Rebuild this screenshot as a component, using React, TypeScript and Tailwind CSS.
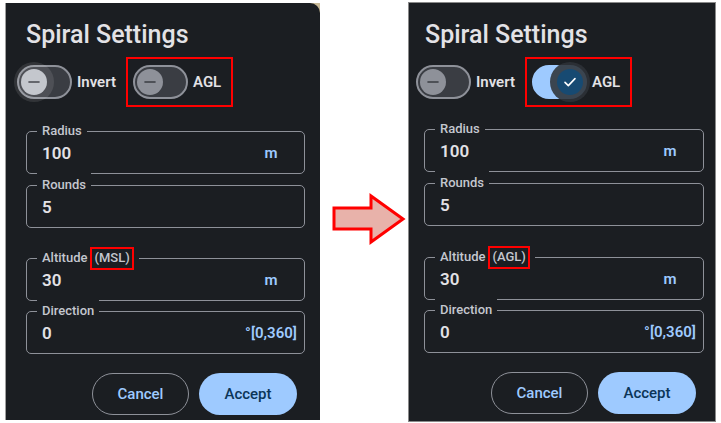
import React from "react";

function MinusIcon({ color }: { color: string }) {
  return (
    <svg width="12" height="12" viewBox="0 0 12 12">
      <line x1="1" y1="6" x2="11" y2="6" stroke={color} strokeWidth="1.6" strokeLinecap="round" />
    </svg>
  );
}

function CheckIcon() {
  return (
    <svg width="16" height="16" viewBox="0 0 24 24" fill="none">
      <path d="M4.5 12.5l5 5L19.5 7" stroke="#ffffff" strokeWidth="2.4" strokeLinecap="round" strokeLinejoin="round" />
    </svg>
  );
}

function Switch({
  checked,
  thumbClass,
  minusColor,
  halo,
}: {
  checked: boolean;
  thumbClass: string;
  minusColor: string;
  halo?: string;
}) {
  return (
    <div
      className={
        checked
          ? "flex h-[34px] w-[55px] shrink-0 items-center justify-end rounded-full border-2 border-[#9ecaff] bg-[#9ecaff] px-[2px]"
          : "flex h-[34px] w-[55px] shrink-0 items-center justify-start rounded-full border-2 border-[#8e9199] bg-[#3a3d43] px-[2px]"
      }
    >
      <div className="relative h-[26px] w-[26px]">
        {halo ? <div className={"absolute -inset-[7px] rounded-full " + halo} /> : null}
        <div className={"relative flex h-[26px] w-[26px] items-center justify-center rounded-full " + thumbClass}>
          {checked ? <CheckIcon /> : <MinusIcon color={minusColor} />}
        </div>
      </div>
    </div>
  );
}

function Field({
  label,
  extra,
  value,
  unit,
  className,
}: {
  label: string;
  extra?: React.ReactNode;
  value: string;
  unit?: string;
  className: string;
}) {
  return (
    <div
      className={
        "relative flex h-[43px] items-center rounded-[5px] border border-[#8e9199] pl-[15px] pr-[5px] " + className
      }
    >
      <div className="absolute left-[10px] top-[-13px] flex h-[24px] items-center bg-[#1b1e22] px-[5px] text-[13px] font-medium leading-[16px] text-[#c4c7cf]">
        <span>{label}</span>
        {extra}
      </div>
      <span className="flex-1 text-[17px] font-semibold leading-[20px] text-[#e3e2e6]">{value}</span>
      {unit ? (
        <span className="w-[56px] text-center text-[15px] font-semibold leading-[20px] text-[#9ecaff]">{unit}</span>
      ) : null}
    </div>
  );
}

function RedTag({ text }: { text: string }) {
  return (
    <span className="ml-[3px] inline-flex h-[23px] items-center border-2 border-[#ff0000] px-[2px] leading-[16px]">
      {text}
    </span>
  );
}

function Panel({ agl }: { agl: boolean }) {
  return (
    <div
      className={
        agl
          ? "flex h-[420px] w-[308px] flex-col border border-[#8a8a8a] bg-[#1b1e22] pl-[15px] pt-[16px]"
          : "flex h-[417px] w-[315px] flex-col rounded-tr-[10px] border-l border-[#a0a0a0] bg-[#1b1e22] pl-[20px] pt-[16px]"
      }
    >
      <div
        className={
          agl
            ? "ml-[1px] text-[25px] font-medium leading-[32px] text-[#e3e2e6]"
            : "text-[25px] font-medium leading-[32px] text-[#e3e2e6]"
        }
      >
        Spiral Settings
      </div>

      <div className={agl ? "-ml-[8px] mt-[6px] flex items-center" : "-ml-[9px] mt-[6px] flex items-center"}>
        <Switch
          checked={false}
          thumbClass={agl ? "bg-[#8e9199]" : "bg-[#c4c7cd]"}
          minusColor={agl ? "#3a3d42" : "#45484e"}
          halo={agl ? undefined : "bg-[rgba(255,255,255,0.1)]"}
        />
        <span className="ml-[5px] text-[15px] font-semibold text-[#e3e2e6]">Invert</span>
        <div className="ml-[10px] flex h-[50px] items-center border-2 border-[#ff0000] pl-[5px] pr-[10px]">
          <Switch
            checked={agl}
            thumbClass={agl ? "bg-[#174a72]" : "bg-[#8e9199]"}
            minusColor="#3a3d42"
            halo={agl ? "bg-[rgba(46,50,56,0.88)]" : undefined}
          />
          <span className="ml-[5px] text-[15px] font-semibold text-[#e3e2e6]">AGL</span>
        </div>
      </div>

      <Field
        className={agl ? "mt-[22px] w-[280px]" : "mt-[24px] w-[279px]"}
        label="Radius"
        value="100"
        unit="m"
      />
      <Field className={agl ? "mt-[11px] w-[280px]" : "mt-[11px] w-[279px]"} label="Rounds" value="5" />
      <Field
        className={agl ? "mt-[31px] w-[280px]" : "mt-[30px] w-[279px]"}
        label="Altitude"
        extra={<RedTag text={agl ? "(AGL)" : "(MSL)"} />}
        value="30"
        unit="m"
      />
      <Field
        className={agl ? "mt-[10px] w-[280px]" : "mt-[10px] w-[279px]"}
        label="Direction"
        value="0"
        unit="°[0,360]"
      />

      <div className={agl ? "mt-[19px] flex w-[280px] justify-end gap-[10px] pr-[8px]" : "mt-[19px] flex w-[279px] justify-end gap-[10px] pr-[8px]"}>
        <button className="flex h-[42px] w-[97px] items-center justify-center rounded-full border border-[#8e9199] text-[15px] font-medium text-[#9ecaff]">
          Cancel
        </button>
        <button className="flex h-[42px] w-[98px] items-center justify-center rounded-full bg-[#9ecaff] text-[15px] font-medium text-[#0b3558]">
          Accept
        </button>
      </div>
    </div>
  );
}

function Arrow() {
  return (
    <svg width="76" height="56" viewBox="0 0 76 56" className="ml-[11px] mt-[190px] shrink-0">
      <polygon
        points="3,18 40,18 40,6 72,29 40,52 40,39 3,39"
        fill="#e8b2aa"
        stroke="#ff0000"
        strokeWidth="3"
        strokeLinejoin="miter"
      />
    </svg>
  );
}

export default function App() {
  return (
    <div className="flex h-[423px] w-[721px] overflow-hidden bg-white [font-family:Roboto,'Noto_Sans',sans-serif]">
      <div className="ml-[5px] mt-[3px] h-[417px] w-[315px] shrink-0 bg-[linear-gradient(#c8b997,#c8b997)] bg-[length:10px_10px] bg-[position:top_right] bg-no-repeat">
        <Panel agl={false} />
      </div>
      <div className="flex w-[88px] shrink-0 items-start">
        <Arrow />
      </div>
      <div className="mt-[2px] shrink-0">
        <Panel agl={true} />
      </div>
    </div>
  );
}
